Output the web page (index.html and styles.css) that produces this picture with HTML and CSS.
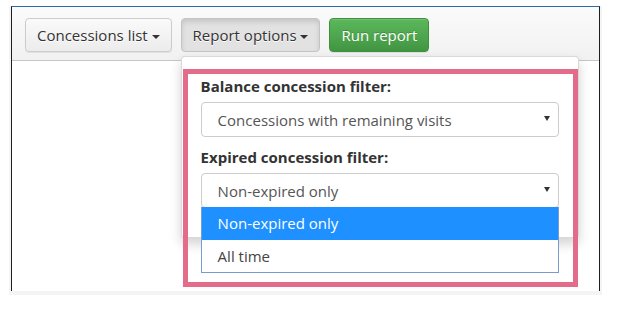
FILE: index.html
```html
<!DOCTYPE html>
<html lang="en">

<head>
  <meta charset="UTF-8">
  <meta name="viewport" content="width=device-width, initial-scale=1.0">
  <title>Concessions report</title>
  <link rel="stylesheet" href="styles.css">
</head>

<body>
  <div class="shell">
    <div class="frame">
      <div class="toolbar">
        <button class="btn btn-default">Concessions list <span class="caret"></span></button>

        <div class="dropdown">
          <button class="btn btn-default active">Report options <span class="caret"></span></button>

          <div class="dropdown-menu">
            <div class="form-group">
              <label class="filter-label">Balance concession filter:</label>
              <div class="select">
                <span>Concessions with remaining visits</span>
                <span class="select-arrow"></span>
              </div>
            </div>

            <div class="form-group">
              <label class="filter-label">Expired concession filter:</label>
              <div class="select open">
                <span>Non-expired only</span>
                <span class="select-arrow"></span>
                <!-- native select popup -->
                <div class="select-options">
                  <div class="option selected">Non-expired only</div>
                  <div class="option">All time</div>
                </div>
              </div>
            </div>
          </div>
        </div>

        <button class="btn btn-success">Run report</button>
      </div>

      <!-- highlight drawn over the options -->
      <div class="highlight"></div>
    </div>
  </div>
</body>

</html>
```

FILE: styles.css
```css
body {
  margin: 0;
  font-family: "Open Sans", "Liberation Sans", Arial, sans-serif;
  font-size: 15px;
  color: #333;
  background-color: #fff;
}

.shell {
  margin: 6px 0 0 9px;
  width: 593px;
  padding: 0 2px 4px;
  box-sizing: border-box;
  background-color: #f4f4f4;
}

.frame {
  position: relative;
  height: 285px;
  box-sizing: border-box;
  background-color: #fff;
  border-top: 1px solid #2d6ca2;
  border-left: 1px solid #1e1e1e;
  border-right: 1px solid #1e1e1e;
}

.toolbar {
  display: flex;
  align-items: flex-start;
  gap: 9px;
  height: 54px;
  box-sizing: border-box;
  padding: 11px 0 0 13px;
  border-bottom: 1px solid #c6c6c6;
  background: linear-gradient(#fbfbfb, #f1f1f1);
}

.btn {
  font-family: inherit;
  font-size: 15px;
  line-height: 20px;
  height: 34px;
  padding: 6px 11px;
  border-radius: 4px;
  border: 1px solid #ccc;
  cursor: pointer;
  white-space: nowrap;
}

.btn-default {
  color: #333;
  text-shadow: 0 1px 0 #fff;
  background: linear-gradient(#fafafa, #ececec);
  box-shadow: inset 0 1px 0 rgba(255, 255, 255, 0.15), 0 1px 1px rgba(0, 0, 0, 0.075);
}

.btn-default.active {
  background: #e2e2e2;
  border-color: #c4c4c4;
  box-shadow: inset 0 3px 5px rgba(0, 0, 0, 0.125);
}

.btn-success {
  color: #fff;
  text-shadow: 0 -1px 0 rgba(0, 0, 0, 0.2);
  background: linear-gradient(#5cb85c, #419641);
  border-color: #3e8f3e;
  box-shadow: inset 0 1px 0 rgba(255, 255, 255, 0.15), 0 1px 1px rgba(0, 0, 0, 0.075);
}

.caret {
  display: inline-block;
  width: 0;
  height: 0;
  margin-left: 0;
  vertical-align: middle;
  border-top: 4px solid #333;
  border-left: 4px solid transparent;
  border-right: 4px solid transparent;
}

.dropdown {
  position: relative;
}

.dropdown-menu {
  position: absolute;
  top: 100%;
  left: 0;
  z-index: 10;
  margin-top: 4px;
  width: 398px;
  box-sizing: border-box;
  padding: 19px 19px 29px;
  background-color: #fff;
  border: 1px solid rgba(0, 0, 0, 0.15);
  border-radius: 4px;
  box-shadow: 0 6px 12px rgba(0, 0, 0, 0.175);
}

.form-group + .form-group {
  margin-top: 10px;
}

.filter-label {
  display: block;
  font-weight: bold;
  line-height: 20px;
  margin-bottom: 6px;
}

.select {
  position: relative;
  display: flex;
  align-items: center;
  justify-content: space-between;
  height: 35px;
  box-sizing: border-box;
  padding: 0 8px 0 16px;
  color: #555;
  border: 1px solid #ccc;
  border-radius: 4px;
  background-color: #fff;
}

.select-arrow {
  width: 0;
  height: 0;
  margin-top: -2px;
  border-top: 5px solid #333;
  border-left: 3px solid transparent;
  border-right: 3px solid transparent;
}

.select-options {
  position: absolute;
  top: 100%;
  left: -1px;
  right: -1px;
  z-index: 20;
  background-color: #fff;
  border: 1px solid #7a9bd0;
  border-top: none;
}

.option {
  height: 32px;
  line-height: 32px;
  padding-left: 16px;
  color: #444;
}

.option.selected {
  height: 33px;
  line-height: 33px;
  color: #fff;
  background-color: #1e90ff;
}

.highlight {
  position: absolute;
  left: 171px;
  top: 62px;
  width: 395px;
  height: 218px;
  box-sizing: border-box;
  border: 5px solid #e26c8a;
  z-index: 15;
  pointer-events: none;
}
```
